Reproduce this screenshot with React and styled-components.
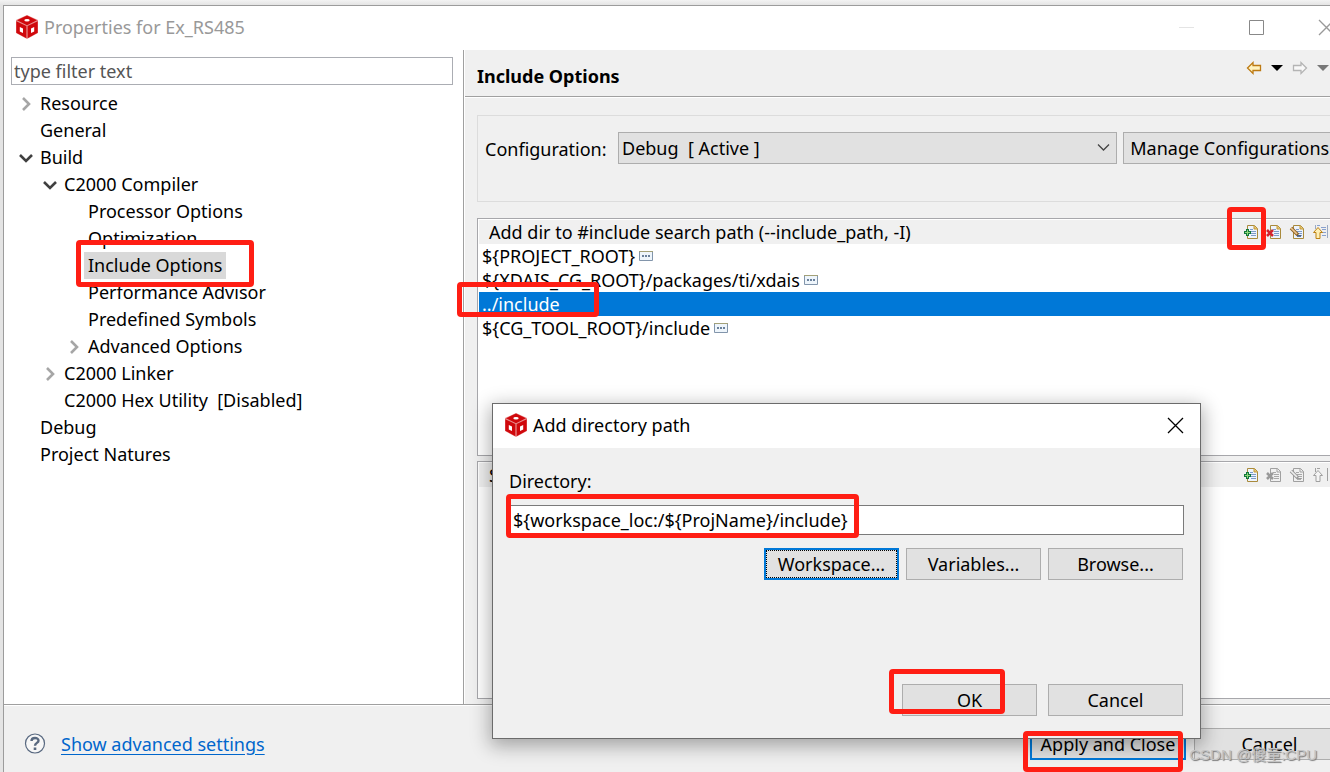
import React from 'react'
import styled, { createGlobalStyle, css } from "styled-components"


const GlobalStyle=createGlobalStyle`
*{
box-sizing:border-box;
}
body{
margin:0;
overflow:hidden;
background-color:#e6e6e6;
font-family:"Noto Sans","Noto Sans CJK SC",sans-serif;
font-size:18px;
line-height:24px;
color:#000;
}
button,input,select{
font:inherit;
color:inherit;
}
`;
const Page=styled.div`
position:relative;
height:100vh;
overflow:hidden;
padding:5px 0 0 3px;
background:linear-gradient(#f3f3f3,#e4e4e4 5px);
`;
const Window=styled.div`
display:flex;
flex-direction:column;
width:calc(100% + 35px);
min-height:calc(100vh + 8px);
border:1px solid #9c9c9c;
background-color:#f0f0f0;
`;
const TitleBar=styled.header`
display:flex;
align-items:center;
height:44px;
padding:0 3px 2px 11px;
background-color:white;
color:${(props) => (props.$active ? "#000" : "#999")};
`;
const Title=styled.h1`
flex:1;
margin:0 0 0 5px;
font-size:18px;
font-weight:400;
`;
const CaptionButton=styled.button`
display:flex;
align-items:center;
justify-content:center;
width:${(props) => props.$width || 70}px;
height:42px;
padding:0;
border:none;
background:none;
`;
const Main=styled.main`
display:flex;
height:654px;
`;
const SidePane=styled.nav`
width:460px;
flex-shrink:0;
padding:7px 10px 0 7px;
border-right:1px solid #a0a0a0;
background-color:white;
`;
const FilterInput=styled.input`
display:block;
width:100%;
height:28px;
padding:0 2px;
border:1px solid #abadb3;
outline:none;
background-color:white;
&::placeholder{
color:#555;
opacity:1;
}
`;
const Tree=styled.ul`
margin:5px 0 0;
padding:0;
list-style:none;
`;
const TreeRow=styled.li`
display:flex;
align-items:center;
height:27px;
padding-left:${(props) => props.$level * 24 + 4}px;
`;
const Twisty=styled.span`
display:flex;
justify-content:center;
width:21px;
`;
const TreeLabel=styled.span`
padding:0 4px;
line-height:27px;
white-space:pre;
background-color:${(props) => (props.$selected ? "#d9d9d9" : "transparent")};
`;
const Content=styled.section`
flex:1;
min-width:0;
display:flex;
flex-direction:column;
border-left:1px solid white;
`;
const PageHeader=styled.div`
display:flex;
align-items:center;
justify-content:space-between;
height:47px;
padding:6px 33px 0 12px;
border-bottom:1px solid #a0a0a0;
box-shadow:0 1px 0 white;
`;
const PageTitle=styled.h2`
margin:0;
font-size:18px;
font-weight:700;
`;
const NavButtons=styled.div`
display:flex;
align-items:center;
gap:7px;
height:20px;
margin-bottom:16px;
`;
const IconButton=styled.button`
display:flex;
padding:0;
border:none;
background:none;
`;
const ConfigGroup=styled.div`
display:flex;
align-items:flex-start;
height:87px;
margin:18px 0 16px 12px;
padding:16px 12px 0 7px;
border:1px solid #dcdcdc;
`;
const ConfigLabel=styled.label`
width:133px;
line-height:34px;
`;
const SelectBox=styled.div`
position:relative;
flex:1;
margin-right:6px;
`;
const Select=styled.select`
display:block;
width:100%;
height:32px;
padding:0 3px;
border:1px solid #adadad;
border-radius:0;
appearance:none;
background-color:#e1e1e1;
`;
const SelectArrow=styled.svg`
position:absolute;
right:7px;
top:11px;
pointer-events:none;
`;
const focusRing=css`
border:2px solid #0078d7;
outline:1px dotted #000;
outline-offset:-3px;
`;
const Button=styled.button`
width:${(props) => props.$width || 135}px;
height:32px;
padding:0;
flex-shrink:0;
border:1px solid #adadad;
background-color:#e1e1e1;
white-space:nowrap;
${(props) => props.$primary && "border:2px solid #0078d7;"}
${(props) => props.$focused && focusRing}
`;
const Lists=styled.div`
flex:1;
display:flex;
flex-direction:column;
gap:5px;
padding:0 0 5px 12px;
`;
const ListBox=styled.div`
flex:1;
padding:1px;
border:1px solid #a7a7ab;
background-color:white;
`;
const ListHeader=styled.div`
display:flex;
align-items:center;
justify-content:space-between;
height:24px;
padding:0 34px 0 10px;
background-color:#f0f0f0;
`;
const ListTools=styled.div`
display:flex;
gap:7px;
`;
const Items=styled.ul`
margin:0;
padding:0;
list-style:none;
`;
const Item=styled.li`
display:flex;
align-items:center;
gap:4px;
height:24px;
padding-left:3px;
background-color:${(props) => (props.$selected ? "#0078d7" : "transparent")};
color:${(props) => (props.$selected ? "white" : "inherit")};
`;
const Footer=styled.footer`
flex:1;
display:flex;
align-items:flex-start;
gap:8px;
padding:23px 19px 20px 20px;
border-top:1px solid #a0a0a0;
box-shadow:inset 0 1px 0 white;
`;
const HelpLink=styled.div`
flex:1;
display:flex;
align-items:center;
gap:15px;
height:32px;
`;
const Link=styled.a`
color:#0066cc;
text-decoration:underline;
text-underline-offset:3px;
`;
const Dialog=styled.div`
position:absolute;
left:492px;
top:403px;
width:709px;
height:336px;
border:1px solid #6b6b6b;
background-color:#f0f0f0;
box-shadow:0 5px 18px 2px rgba(0,0,0,0.32);
`;
const DialogBody=styled.div`
display:flex;
flex-direction:column;
padding:21px 16px 0;
`;
const DialogInput=styled.input`
height:30px;
margin:12px 0 13px;
padding:0 3px;
border:1px solid #7a7a7a;
outline:none;
background-color:white;
`;
const ButtonRow=styled.div`
display:flex;
justify-content:flex-end;
gap:${(props) => props.$gap}px;
padding-right:1px;
margin-bottom:104px;
`;
const Mark=styled.div`
position:absolute;
left:${(props) => props.$x}px;
top:${(props) => props.$y}px;
width:${(props) => props.$w}px;
height:${(props) => props.$h}px;
border:5px solid #ff1e14;
border-radius:4px;
pointer-events:none;
`;
const Watermark=styled.div`
position:absolute;
right:13px;
bottom:5px;
font-family:"Liberation Sans","Noto Sans CJK SC",sans-serif;
font-size:15px;
color:#c4c4c4;
text-shadow:1px 1px 1px #777;
`;

const Logo = () => (
  <svg width="24" height="24" viewBox="0 0 24 24">
    <path d="M12 0 23 5v13l-11 6L1 18V5z" fill="#e88f8f" />
    <path d="M12 .5 22 5.300 12 10.200 2 5.300z" fill="#d0080c" />
    <path d="M1.300 6.300 11.400 11V23.300L1.300 17.800z" fill="#d0080c" />
    <path d="M22.700 6.300 12.600 11V23.300l10.100-5.500z" fill="#d0080c" />
    <ellipse cx="12" cy="5.200" rx="2.700" ry="1.300" fill="#fff" />
    <path d="M4.800 12 8 13.400v4.600L4.800 16.500z" fill="#fff" />
    <path d="M19.200 12 16 13.400v4.600l3.200-1.500z" fill="#fff" />
  </svg>
)

const Close = () => (
  <svg width="17" height="17" viewBox="0 0 17 17">
    <path d="M1 1 16 16M16 1 1 16" stroke="currentColor" strokeWidth="1.300" />
  </svg>
)

const Chevron = ({ open }) => (
  <svg width="16" height="16" viewBox="0 0 16 16" fill="none" strokeWidth="2.600">
    {open
      ? <path d="M2 5 8 11 14 5" stroke="#404040" />
      : <path d="M5 2 11 8 5 14" stroke="#a6a6a6" />}
  </svg>
)

const Arrow = ({ forward }) => (
  <svg width="16" height="16" viewBox="0 0 16 16">
    <path
      d={forward ? "M14.500 8 9 2.500v3H1.500v5H9v3z" : "M1.500 8 7 2.500v3h7.500v5H7v3z"}
      fill={forward ? "#f8f8f8" : "#fff3c0"}
      stroke={forward ? "#b4b4b4" : "#bd7a13"}
      strokeWidth="1.300"
    />
  </svg>
)

const Caret = ({ color }) => (
  <svg width="16" height="16" viewBox="0 0 16 16">
    <path d="M2 5h12L8 11z" fill={color} />
  </svg>
)

const Doc = ({ off, children }) => (
  <svg width="16" height="16" viewBox="0 0 16 16">
    <path d="M4.500 1.500h7l3 3v10h-10z" fill={off ? "#f0f0f0" : "#eef4fc"} stroke={off ? "#a0a0a0" : "#a98a3c"} />
    <path d="M11 1.500V5h3.500" fill={off ? "none" : "#e8c56a"} stroke={off ? "#a0a0a0" : "#c39a3b"} />
    <path d="M7 5.500h3M8 7.500h5M8 9.500h5M8 11.500h5" stroke={off ? "#a8a8a8" : "#7d9bc9"} />
    {children}
  </svg>
)

const AddIcon = () => (
  <Doc>
    <path d="M3 5h3v2h2v3H6v2H3v-2H1V7h2z" fill="#11783a" />
    <path d="M4.500 6v5M2 8.500h5" stroke="#8fd67a" />
  </Doc>
)

const DeleteIcon = ({ off }) => (
  <Doc off={off}>
    <path d="M1 6l6 6M7 6l-6 6" stroke={off ? "#999" : "#d2232e"} strokeWidth="2.600" />
  </Doc>
)

const EditIcon = ({ off }) => (
  <Doc off={off}>
    <path d="M2 4 9 11" stroke={off ? "#999" : "#8c6427"} strokeWidth="3.500" />
    <path d="M2 4 8 10" stroke={off ? "#eee" : "#efc58c"} strokeWidth="1.700" />
    <path d="M8 12h4" stroke={off ? "#999" : "#374f78"} strokeWidth="1.500" />
  </Doc>
)

const UpIcon = ({ off }) => (
  <svg width="16" height="16" viewBox="0 0 16 16">
    <path d={off ? "M3.500 1v4M5 1.500h3M15.500 1v13" : "M3.500 1v4M15.500 1v13"} stroke={off ? "#a0a0a0" : "#9aa9c3"} />
    {!off && <path d="M5 1.500h3M9 3.500h5M10 5.500h4M10 8.500h4M10 11.500h4" stroke="#88a1ce" />}
    <path
      d="M6 3.500 10.500 8.500H8v6H4v-6H1.500z"
      fill={off ? "#f4f4f4" : "#fff0b5"}
      stroke={off ? "#a0a0a0" : "#bd8214"}
    />
  </svg>
)

const MoreIcon = () => (
  <svg width="14" height="10" viewBox="0 0 14 10">
    <path d="M.5 9.500V.5h13v9z" fill="#eef5fb" stroke="#8295ab" />
    <path d="M0 .5h14" stroke="#a3a178" />
    <path d="M3 5h2M6 5h2M9 5h2" stroke="#3f597c" strokeWidth="1.500" />
  </svg>
)

const HelpIcon = () => (
  <svg width="22" height="22" viewBox="0 0 22 22" fill="none" stroke="#596980">
    <circle cx="11" cy="10.500" r="9.500" fill="#f7f7f7" strokeWidth="1.200" />
    <path d="M7.500 8C7.500 4 14.500 4 14.500 7.700 14.500 10 11 9.800 11 12.700" strokeWidth="2.400" />
    <path d="M11 14.500v2.500" strokeWidth="2.600" />
  </svg>
)

const tree = [
  { label: "Resource", level: 0, open: false },
  { label: "General", level: 0 },
  { label: "Build", level: 0, open: true },
  { label: "C2000 Compiler", level: 1, open: true },
  { label: "Processor Options", level: 2 },
  { label: "Optimization", level: 2 },
  { label: "Include Options", level: 2, selected: true },
  { label: "Performance Advisor", level: 2 },
  { label: "Predefined Symbols", level: 2 },
  { label: "Advanced Options", level: 2, open: false },
  { label: "C2000 Linker", level: 1, open: false },
  { label: "C2000 Hex Utility  [Disabled]", level: 1 },
  { label: "Debug", level: 0 },
  { label: "Project Natures", level: 0 },
]

const paths = [
  { text: "${PROJECT_ROOT}", more: true },
  { text: "${XDAIS_CG_ROOT}/packages/ti/xdais", more: true },
  { text: "../include", selected: true },
  { text: "${CG_TOOL_ROOT}/include", more: true },
]

const marks = [
  [76, 240, 178, 47],
  [457, 282, 142, 35],
  [1227, 207, 39, 43],
  [506, 494, 353, 44],
  [889, 669, 116, 45],
  [1023, 731, 160, 41],
]

const ListPanel = ({ title, items = [], off }) => (
  <ListBox>
    <ListHeader>
      <span>{title}</span>
      <ListTools>
        <IconButton aria-label="Add"><AddIcon /></IconButton>
        <IconButton aria-label="Delete"><DeleteIcon off={off} /></IconButton>
        <IconButton aria-label="Edit"><EditIcon off={off} /></IconButton>
        <IconButton aria-label="Move up"><UpIcon off={off} /></IconButton>
      </ListTools>
    </ListHeader>
    <Items>
      {items.map((item) => (
        <Item key={item.text} $selected={item.selected}>
          {item.text}
          {item.more && <MoreIcon />}
        </Item>
      ))}
    </Items>
  </ListBox>
)

const AddDirectory = () => (
  <Dialog role="dialog" aria-label="Add directory path">
    <TitleBar $active>
      <Logo />
      <Title as="h2">Add directory path</Title>
      <CaptionButton $width={44} aria-label="Close"><Close /></CaptionButton>
    </TitleBar>
    <DialogBody>
      <label htmlFor="directory">Directory:</label>
      <DialogInput id="directory" defaultValue="${workspace_loc:/${ProjName}/include}" />
      <ButtonRow $gap={7}>
        <Button $focused>Workspace...</Button>
        <Button>Variables...</Button>
        <Button>Browse...</Button>
      </ButtonRow>
      <ButtonRow $gap={11}>
        <Button>OK</Button>
        <Button>Cancel</Button>
      </ButtonRow>
    </DialogBody>
  </Dialog>
)

const App = () => {
  return (
    <Page>
      <GlobalStyle />
      <Window>
        <TitleBar>
          <Logo />
          <Title>Properties for Ex_RS485</Title>
          <CaptionButton aria-label="Minimize">
            <svg width="15" height="15"><path d="M0 7.500h15" stroke="#e4e4e4" /></svg>
          </CaptionButton>
          <CaptionButton aria-label="Maximize">
            <svg width="15" height="15"><path d="M.5.5h14v14H.5z" fill="none" stroke="#888" /></svg>
          </CaptionButton>
          <CaptionButton aria-label="Close"><Close /></CaptionButton>
        </TitleBar>
        <Main>
          <SidePane>
            <FilterInput placeholder="type filter text" aria-label="Filter" />
            <Tree>
              {tree.map((node) => (
                <TreeRow key={node.label} $level={node.level}>
                  <Twisty>{node.open !== undefined && <Chevron open={node.open} />}</Twisty>
                  <TreeLabel $selected={node.selected}>{node.label}</TreeLabel>
                </TreeRow>
              ))}
            </Tree>
          </SidePane>
          <Content>
            <PageHeader>
              <PageTitle>Include Options</PageTitle>
              <NavButtons>
                <IconButton aria-label="Back"><Arrow /></IconButton>
                <IconButton aria-label="Back history"><Caret color="#000" /></IconButton>
                <IconButton aria-label="Forward"><Arrow forward /></IconButton>
                <IconButton aria-label="Forward history"><Caret color="#777" /></IconButton>
              </NavButtons>
            </PageHeader>
            <ConfigGroup>
              <ConfigLabel htmlFor="configuration">Configuration:</ConfigLabel>
              <SelectBox>
                <Select id="configuration">
                  <option>{"Debug\u00a0 [ Active ]"}</option>
                </Select>
                <SelectArrow width="13" height="9" viewBox="0 0 13 9" fill="none">
                  <path d="M1 1.500 6.500 7 12 1.500" stroke="#444" strokeWidth="1.300" />
                </SelectArrow>
              </SelectBox>
              <Button $width={228}>Manage Configurations...</Button>
            </ConfigGroup>
            <Lists>
              <ListPanel title="Add dir to #include search path (--include_path, -I)" items={paths} />
              <ListPanel title="Specify a preinclude file (--preinclude)" off />
            </Lists>
          </Content>
        </Main>
        <Footer>
          <HelpLink>
            <HelpIcon />
            <Link href="#advanced">Show advanced settings</Link>
          </HelpLink>
          <Button $width={156} $primary>Apply and Close</Button>
          <Button $width={151}>Cancel</Button>
        </Footer>
      </Window>
      <AddDirectory />
      {marks.map(([x, y, w, h]) => (
        <Mark key={`${x}-${y}`} $x={x} $y={y} $w={w} $h={h} />
      ))}
      <Watermark>CSDN @傻童:CPU</Watermark>
    </Page>
  )
}

export default App;
